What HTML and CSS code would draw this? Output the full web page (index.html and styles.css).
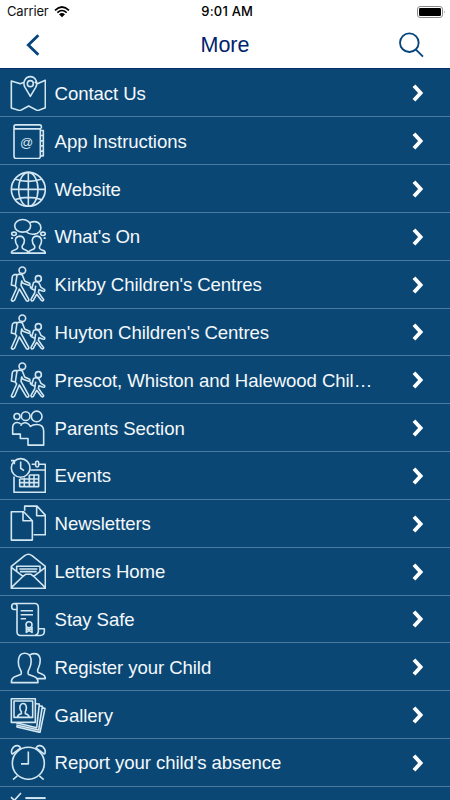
FILE: index.html
```html
<!DOCTYPE html>
<html lang="en">
<head>
<meta charset="utf-8">
<title>More</title>
<link rel="stylesheet" href="styles.css">
</head>
<body>
<div class="status">
  <div class="carrier"><span>Carrier</span>
    <svg class="wifi" viewBox="0 0 48 36"><path d="M3 13Q24-7 45 13M10 20Q24 7 38 20"/><path class="solid" d="M15 25Q24 17 33 25L24 34z"/></svg>
  </div>
  <div class="time">9:01 AM</div>
  <div class="battery"><svg viewBox="0 0 87 36"><rect class="shell" x="1.5" y="1.5" width="75" height="33" rx="8"/><rect x="6" y="6" width="66" height="24" rx="4"/><path d="M81 13q5 5 0 10z" fill="#999"/></svg></div>
</div>
<header class="nav">
  <svg class="back" viewBox="0 0 42 66"><path d="M37 4L7 33L37 62"/></svg>
  <h1>More</h1>
  <svg class="search" viewBox="0 0 75 78"><circle cx="31" cy="32" r="28"/><path d="M50 52L72 74"/></svg>
</header>
<svg class="defs" aria-hidden="true">
  <symbol id="chev" viewBox="0 0 33 54"><path d="M6 5L26 27L6 49"/></symbol>
  <symbol id="walk" viewBox="30 19 108 108">
    <circle cx="67" cy="32" r="10"/>
    <path d="M51 45L42 45Q38 46 37 51L34 76L46 79M51 46Q60 41 67 46L74 64L89 71Q92 76 86 77L69 71L65 64L63 77L83 113L87 121Q84 127 79 123L58 88L44 121Q38 128 34 121L50 85L46 79L51 46"/>
    <circle cx="115" cy="57" r="9"/>
    <path d="M101 68L95 87L103 91M101 68Q109 64 117 70L123 83L134 90Q135 96 128 94L117 90L115 98L131 120Q130 126 124 122L110 104L100 122Q94 127 93 119L104 100L107 78M92 78Q89 84 95 87"/>
  </symbol>
</svg>
<ul class="list">
  <li><svg class="icon" viewBox="30 21 108 108"><path d="M72 43L61 47L34 39V120L60 128L86 114L113 128L136 119V37L112 47L104 42M91 85L75 58Q69 47 74 37Q80 26 91 26Q102 26 108 37Q113 47 107 58z"/><circle cx="91" cy="47" r="9"/></svg><span>Contact Us</span><svg class="chev"><use href="#chev"/></svg></li>
  <li><svg class="icon" viewBox="30 164.5 108 108"><path d="M124 181V174Q124 170 119 170H47Q42 170 42 176V264Q42 271 49 271H115Q121 271 121 265V182H47Q42 182 42 176M121 187H130V202H121M130 202V218H121M130 218V233H121M130 233V249H121M130 249V263H121"/><text x="80" y="237">@</text></svg><span>App Instructions</span><svg class="chev"><use href="#chev"/></svg></li>
  <li><svg class="icon" viewBox="30 20 108 108"><circle cx="85" cy="75" r="51"/><ellipse cx="85" cy="75" rx="29" ry="51"/><path d="M85 24V126M34 75H136M44 44Q85 58 126 44M44 106Q85 92 126 106"/></svg><span>Website</span><svg class="chev"><use href="#chev"/></svg></li>
  <li><svg class="icon" viewBox="30 163.6 108 108"><ellipse cx="68" cy="187" rx="24" ry="19"/><path d="M90 177Q112 169 121 185Q127 202 111 210Q91 217 78 204"/><ellipse cx="42" cy="211" rx="7" ry="5"/><ellipse cx="129" cy="211" rx="7" ry="5"/><path d="M33 224H39M131 224H137M34 269H136Q136 262 127 260Q116 257 119 248Q126 239 124 228Q121 218 111 218Q99 218 97 229Q96 240 104 248Q106 256 96 259Q86 262 85 269Q84 262 75 259Q64 256 67 247Q74 239 73 229Q70 218 59 218Q48 219 46 229Q46 240 53 248Q55 256 46 259Q34 262 34 269"/></svg><span>What's On</span><svg class="chev"><use href="#chev"/></svg></li>
  <li><svg class="icon"><use href="#walk"/></svg><span>Kirkby Children's Centres</span><svg class="chev"><use href="#chev"/></svg></li>
  <li><svg class="icon"><use href="#walk"/></svg><span>Huyton Children's Centres</span><svg class="chev"><use href="#chev"/></svg></li>
  <li><svg class="icon"><use href="#walk"/></svg><span>Prescot, Whiston and Halewood Chil…</span><svg class="chev"><use href="#chev"/></svg></li>
  <li><svg class="icon" viewBox="30 29.6 108 108"><circle cx="51" cy="49" r="9"/><circle cx="77" cy="48" r="13"/><circle cx="110" cy="49" r="16"/><path d="M62 71Q53 64 44 69Q38 73 38 81V102H61V115H84V135H131V93Q131 73 110 73Q98 73 91 79Q84 67 73 68Q65 69 62 77"/></svg><span>Parents Section</span><svg class="chev"><use href="#chev"/></svg></li>
  <li><svg class="icon" viewBox="30 173.2 108 108"><circle cx="62" cy="206" r="28"/><path d="M33 184H43V195M62 187V207L72 214M95 195H105M117 195H136V279H42V232M91 212H136"/><rect x="107" y="186" width="9" height="17" rx="4"/><path d="M59 239V262H116V227H88M59 239H116M59 250H116M73 235V262M88 227V262M102 227V262"/></svg><span>Events</span><svg class="chev"><use href="#chev"/></svg></li>
  <li><svg class="icon" viewBox="30 28.7 108 108"><path d="M34 49H71L97 76V134H34zM69 50V76H96M74 46V32H111L136 59V118H101M110 33V61H135"/></svg><span>Newsletters</span><svg class="chev"><use href="#chev"/></svg></li>
  <li><svg class="icon" viewBox="30 172.2 108 108"><path d="M34 212L74 180Q85 172 96 180L136 212V278H34zM34 215L69 242L77 236H93L101 242L136 215M34 276L69 242M101 242L136 276M50 226V212H120V226M58 220H112M60 228H110"/></svg><span>Letters Home</span><svg class="chev"><use href="#chev"/></svg></li>
  <li><svg class="icon" viewBox="30 27.7 108 108"><path d="M50 53H42Q35 53 35 44Q35 35 44 35H106Q115 36 115 47V111M44 35Q53 37 51 47V119Q51 131 62 131H121Q132 131 133 120V111H115V119Q113 131 103 131M62 57H99M62 69H99M62 81H78"/><circle cx="87" cy="99" r="9"/><path d="M79 106V122L87 116L96 122V106M79 112H95"/></svg><span>Stay Safe</span><svg class="chev"><use href="#chev"/></svg></li>
  <li><svg class="icon" viewBox="30 171.2 108 108"><path d="M34 272Q34 258 46 254L62 248Q67 243 60 231Q53 219 56 201Q59 184 74 184Q90 184 93 201Q95 218 88 230Q81 243 86 248L102 254Q114 258 114 272zM90 189Q96 185 103 185Q117 185 120 199Q122 214 116 226Q110 237 115 242L127 247Q136 250 136 260H112"/></svg><span>Register your Child</span><svg class="chev"><use href="#chev"/></svg></li>
  <li><svg class="icon" viewBox="30 20.8 108 108"><rect x="34" y="26" width="72" height="71"/><path d="M42 33H98V82H42zM53 81Q53 73 64 71V65Q57 56 61 46Q66 37 75 42Q83 51 76 65V71Q87 73 87 81M107 41L118 42L110 113L48 98M118 47L127 49L116 120L49 105M127 52L135 55L120 127L51 111V106"/></svg><span>Gallery</span><svg class="chev"><use href="#chev"/></svg></li>
  <li><svg class="icon" viewBox="30 164.3 108 108"><circle cx="85" cy="222" r="48"/><path d="M85 187V224H63M52 260L39 271M118 260L131 271M36 194Q31 184 41 173Q54 164 62 176L38 194zM134 194Q139 184 129 173Q116 164 108 176L132 194z"/></svg><span>Report your child's absence</span><svg class="chev"><use href="#chev"/></svg></li>
  <li><svg class="icon" viewBox="30 307.8 108 108"><path d="M33 323L43 333L63 311"/><path class="bar" d="M76 326H137"/></svg><span></span></li>
</ul>
</body>
</html>
```
FILE: styles.css
```css
* { box-sizing: border-box; }
body {
  margin: 0;
  width: 450px;
  height: 800px;
  overflow: hidden;
  background: #fff;
  font-family: "Liberation Sans", Arial, sans-serif;
}
.status {
  display: grid;
  grid-template-columns: 1fr auto 1fr;
  align-items: center;
  height: 23px;
  padding: 0 4.5px 0 7px;
  font: 13px/23px Inter, sans-serif;
  color: #111;
}
.carrier { display: flex; align-items: center; gap: 5.5px; letter-spacing: -0.15px; }
.wifi { width: 16px; height: 12px; fill: none; stroke: #000; stroke-width: 5; }
.wifi .solid { fill: #000; stroke: none; }
.time { font-weight: 500; color: #000; letter-spacing: 0.2px; padding-left: 2px; }
.battery { display: flex; justify-content: flex-end; }
.battery svg { width: 29px; height: 12px; }
.shell { fill: none; stroke: #888; stroke-width: 3; }
.nav {
  display: grid;
  grid-template-columns: 1fr auto 1fr;
  align-items: center;
  height: 46.45px;
  padding: 0 26px;
  border-bottom: 1px solid #00306c;
}
.nav svg { fill: none; stroke: #06447c; margin-bottom: 1.4px; }
.back { width: 14px; height: 22px; stroke-width: 8.5; }
.nav h1 { margin: 0 0 0.4px; font-size: 21.5px; font-weight: 400; color: #00246c; }
.search { width: 25px; height: 26px; stroke-width: 5.5; justify-self: end; }
.defs { display: none; }
.list { margin: 0; padding: 0; list-style: none; background: #0a4775; }
.list li {
  display: flex;
  align-items: center;
  height: 47.84px;
  padding: 0 27px 0 10px;
  border-bottom: 1px solid #4b7ba1;
  color: #f4f8fb;
  font-size: 18.6px;
  letter-spacing: -0.08px;
}
.icon {
  flex: none;
  width: 36px;
  height: 36px;
  margin-right: 8.6px;
  fill: none;
  stroke: #d3e7f2;
  stroke-width: 4.8;
  stroke-linejoin: round;
}
.icon text { font: 39px "Liberation Sans", sans-serif; text-anchor: middle; fill: #d3e7f2; stroke: none; }
.icon .bar { stroke-width: 6; }
.list span { flex: 1; white-space: nowrap; padding-top: 2px; }
.chev { width: 11px; height: 18px; margin-top: 1px; fill: none; stroke: #fff; stroke-width: 11.5; }
```
